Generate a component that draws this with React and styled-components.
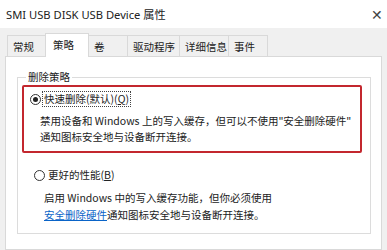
import React from "react";
import styled, { createGlobalStyle } from "styled-components";

const GlobalStyle = createGlobalStyle`
  body {
    margin: 0;
    font-family: "Noto Sans CJK SC", "Noto Sans", sans-serif;
    font-size: 10.5px;
    color: #1a1a1a;
  }
`;

const Window = styled.div`
  width: 387px;
  height: 250px;
  background: #f0f0f0;
  overflow: hidden;
  display: flex;
  flex-direction: column;
`;

const TitleBar = styled.div`
  height: 28px;
  background: #ffffff;
  display: flex;
  align-items: center;
  justify-content: space-between;
  padding: 0 4px 0 6px;
  font-family: "Noto Sans", "Noto Sans CJK SC", sans-serif;
  font-size: 11.2px;
  color: #222;
`;

const Close = styled.span`
  font-size: 14px;
  font-weight: 300;
  color: #444;
`;

const TabRow = styled.div`
  display: flex;
  align-items: flex-end;
  height: 28px;
  padding-left: 7px;
`;

const Tab = styled.div`
  height: ${(p) => (p.active ? 24 : 21)}px;
  width: ${(p) => p.w}px;
  box-sizing: border-box;
  border: 1px solid #d9d9d9;
  border-bottom: none;
  margin-right: -1px;
  background: ${(p) => (p.active ? "#ffffff" : "#f0f0f0")};
  margin-bottom: ${(p) => (p.active ? -1 : 0)}px;
  position: relative;
  z-index: ${(p) => (p.active ? 2 : 1)};
  display: flex;
  align-items: center;
  padding: 0 0 ${(p) => (p.active ? 3 : 0)}px ${(p) => (p.active ? 7 : 5)}px;
  color: #222;
`;

const Panel = styled.div`
  flex: 1;
  margin: 0 5px;
  background: #ffffff;
  border: 1px solid #d9d9d9;
  padding-top: 12px;
`;

const Group = styled.fieldset`
  margin: 0 10px 0 11px;
  padding: 0 8px 24px 4px;
  border: 1px solid #dcdcdc;
  height: 165px;
  box-sizing: border-box;
`;

const Legend = styled.legend`
  padding: 0 2px;
  margin-left: 4px;
  line-height: 16px;
  color: #222;
`;

const Highlight = styled.div`
  border: 2px solid #c3272e;
  border-radius: 2px;
  padding: 4px 0 6px 0;
`;

const Option = styled.div`
  padding: ${(p) => (p.boxed ? "0 0 0 6px" : "0 0 0 12px")};
  margin-top: ${(p) => (p.boxed ? 0 : 14)}px;
`;

const RadioRow = styled.div`
  display: flex;
  align-items: center;
  height: 16px;
  gap: 1px;
`;

const Radio = styled.span`
  width: 11px;
  height: 11px;
  border: 1px solid #333;
  border-radius: 50%;
  box-sizing: border-box;
  display: flex;
  align-items: center;
  justify-content: center;
  background: #fff;
  flex-shrink: 0;

  &::after {
    content: "";
    width: 5px;
    height: 5px;
    border-radius: 50%;
    background: ${(p) => (p.checked ? "#222" : "transparent")};
  }
`;

const Label = styled.span`
  padding: 0 1px;
  line-height: 14px;
  border: 1px ${(p) => (p.focused ? "dotted #444" : "solid transparent")};
  color: #222;
`;

const Key = styled.u``;

const Desc = styled.div`
  padding-left: 10px;
  margin-top: ${(p) => p.top}px;
  line-height: ${(p) => p.lh || 16}px;
  white-space: nowrap;
  color: #222;
`;

const Link = styled.a`
  color: #0a64c8;
  text-decoration: underline;
`;

const tabs = [
  { name: "常规", w: 39 },
  { name: "策略", w: 44, active: true },
  { name: "卷", w: 40 },
  { name: "驱动程序", w: 53 },
  { name: "详细信息", w: 50 },
  { name: "事件", w: 40 },
];

export default function App() {
  return (
    <>
      <GlobalStyle />
      <Window>
        <TitleBar>
          <span>SMI USB DISK USB Device 属性</span>
          <Close>✕</Close>
        </TitleBar>
        <TabRow>
          {tabs.map((t) => (
            <Tab key={t.name} w={t.w} active={t.active}>
              {t.name}
            </Tab>
          ))}
        </TabRow>
        <Panel>
          <Group>
            <Legend>删除策略</Legend>
            <Highlight>
              <Option boxed>
                <RadioRow>
                  <Radio checked />
                  <Label focused>
                    快速删除(默认)(<Key>Q</Key>)
                  </Label>
                </RadioRow>
                <Desc top={6}>
                  禁用设备和 Windows 上的写入缓存，但可以不使用"安全删除硬件"
                  <br />
                  通知图标安全地与设备断开连接。
                </Desc>
              </Option>
            </Highlight>
            <Option>
              <RadioRow>
                <Radio />
                <Label>
                  更好的性能(<Key>B</Key>)
                </Label>
              </RadioRow>
              <Desc top={6} lh={17}>
                启用 Windows 中的写入缓存功能，但你必须使用
                <br />
                <Link>安全删除硬件</Link>通知图标安全地与设备断开连接。
              </Desc>
            </Option>
          </Group>
        </Panel>
      </Window>
    </>
  );
}
